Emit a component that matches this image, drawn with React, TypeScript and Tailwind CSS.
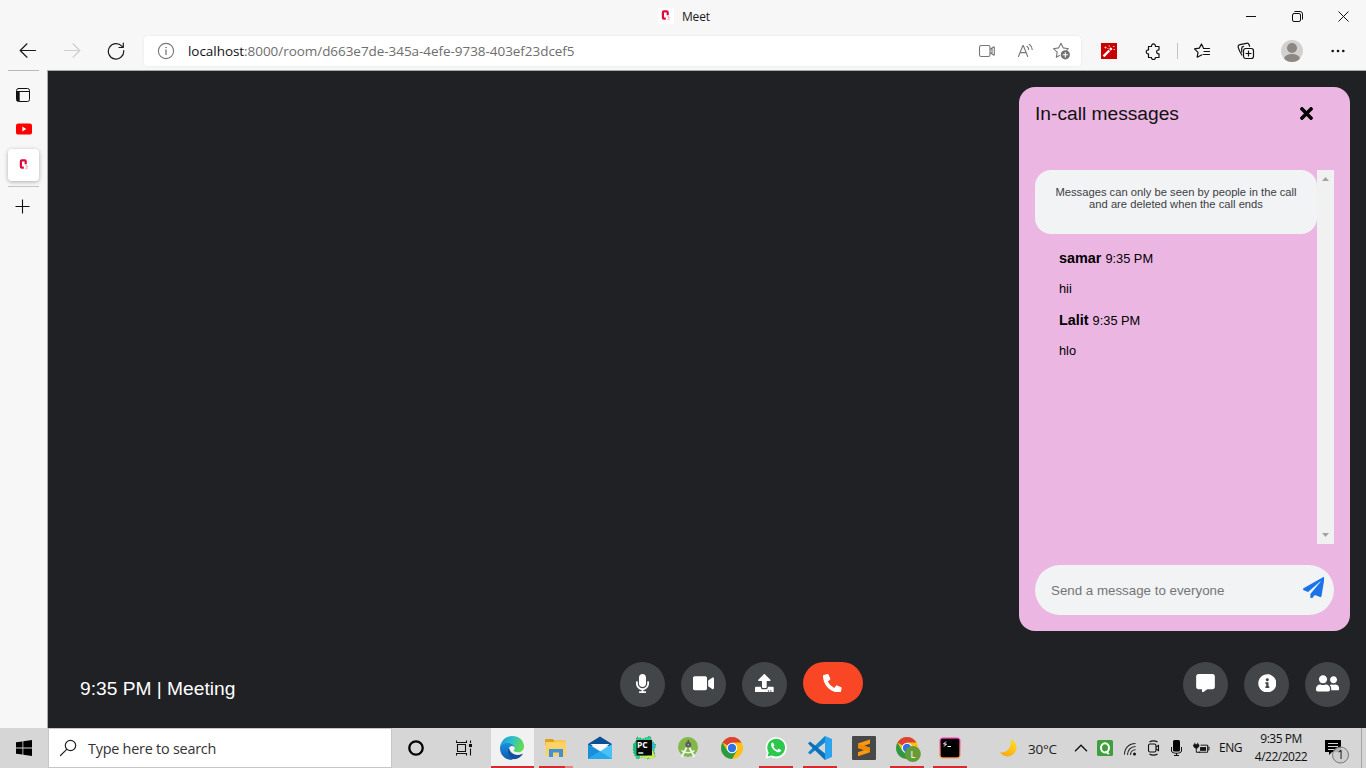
import React from "react";
import {
  FaTimes,
  FaPaperPlane,
  FaMicrophone,
  FaVideo,
  FaUpload,
  FaPhoneAlt,
  FaCommentAlt,
  FaInfoCircle,
  FaUserFriends,
} from "react-icons/fa";

type IconProps = { className?: string };

const stroke = {
  fill: "none",
  stroke: "currentColor",
  strokeLinecap: "round" as const,
  strokeLinejoin: "round" as const,
};

function MeetIcon({ className = "" }: IconProps) {
  return (
    <svg viewBox="0 0 16 16" className={"h-4 w-4 shrink-0 bg-white " + className}>
      <path d="M9.700 7.300V4.300c0-.6-.3-.9-.9-.9H5.800c-.6 0-.9.3-.9.900v5.400c0 .6.300.9.900.9h2" fill="none" stroke="#de0a3c" strokeWidth="2.200" />
      <path d="M9.300 9c1-.8 2.200-.2 2.100.5-.1.600-.9.700-.9.700s1 .2.900.9c-.2.800-1.500.8-2 .3" fill="none" stroke="#f58ca6" strokeWidth=".9" />
    </svg>
  );
}

function TitleBar() {
  return (
    <div className="flex h-8 items-center">
      <MeetIcon className="ml-[658px]" />
      <span className="mt-[2px] ml-2 w-[60px] text-[12px] leading-4 tracking-[-0.2px] text-[#1a1a1a]">Meet</span>
      <svg viewBox="0 0 10 10" className="ml-[504px] h-[10px] w-[10px] shrink-0"><path d="M0 5.500h10" stroke="#111" /></svg>
      <svg viewBox="0 0 11 11" className="ml-9 h-[11px] w-[11px] shrink-0" {...stroke} stroke="#111">
        <rect x=".5" y="2.500" width="8" height="8" rx="1.500" />
        <path d="M2.800.5h5.200a2.500 2.500 0 0 1 2.500 2.500v5.200" />
      </svg>
      <svg viewBox="0 0 11 11" className="ml-[35px] h-[11px] w-[11px] shrink-0" stroke="#111"><path d="M.5.500l10 10M10.500.500l-10 10" /></svg>
    </div>
  );
}

function Toolbar() {
  return (
    <div className="flex h-[38px] items-center">
      <svg viewBox="0 0 18 16" className="ml-[19px] h-4 w-[18px] shrink-0 text-[#1a1a1a]" {...stroke} strokeWidth="1.200">
        <path d="M16.500 7.500H1.500M8 .8L1.200 7.500 8 14.200" />
      </svg>
      <svg viewBox="0 0 18 16" className="ml-[26px] h-4 w-[18px] shrink-0 text-[#cfcfcf]" {...stroke} strokeWidth="1.200">
        <path d="M1.500 7.500h15M10 .8l6.800 6.700L10 14.200" />
      </svg>
      <svg viewBox="0 0 18 18" className="ml-[26px] h-[18px] w-[18px] shrink-0 text-[#1a1a1a]" {...stroke} strokeWidth="1.200">
        <path d="M16.700 8.500A7.700 7.700 0 1 1 14.800 4.200L16 5.300M16.300 1.200v4.300H12" />
      </svg>
      <div className="ml-[19px] flex h-[30px] w-[937px] shrink-0 items-center rounded bg-white shadow-[0_0_3px_rgba(0,0,0,0.07)]">
        <svg viewBox="0 0 18 18" className="ml-[13px] h-[18px] w-[18px] shrink-0 text-[#767676]" {...stroke}>
          <circle cx="9" cy="9" r="7.600" strokeWidth="1.100" />
          <path d="M9 8v4.500" strokeWidth="1.300" />
          <circle cx="9" cy="5.500" r=".5" fill="currentColor" strokeWidth=".5" />
        </svg>
        <span className="ml-[13px] w-[760px] text-[13.500px] tracking-[-0.05px] whitespace-nowrap text-[#6e6e6e]">
          <span className="text-[#111]">localhost</span>:8000/room/d663e7de-345a-4efe-9738-403ef23dcef5
        </span>
        <svg viewBox="0 0 18 14" className="ml-[30px] h-[14px] w-[18px] shrink-0 text-[#767676]" {...stroke} strokeWidth="1.100">
          <rect x="1.500" y="1.500" width="10.500" height="11" rx="1.800" />
          <path d="M12.300 5.300l3.300-2.300c.3-.2.700 0 .7.300v7.400c0 .3-.4.500-.7.300l-3.300-2.300M14 4.500v5" />
        </svg>
        <svg viewBox="0 0 18 16" className="ml-[21px] h-4 w-[18px] shrink-0 text-[#767676]" {...stroke} strokeWidth="1.100">
          <path d="M1.500 13.500L5.900 2.500h.4L10.700 13.500M3.100 9.600h6M9.900 3.300c1.100.8 1.700 1.800 1.800 3.200M12.200 1.300c1.800 1.200 2.800 3 3 5.200" />
        </svg>
        <svg viewBox="0 0 20 18" className="ml-[17px] h-[18px] w-5 shrink-0 text-[#767676]" {...stroke} strokeWidth="1.100">
          <path d="M7.500 13.600L4.300 15.300l.9-5.100L1.500 6.700l5.100-.8L9 1.300l2.300 4.600 5.100.8-1.800 1.600" />
          <circle cx="13.300" cy="12.800" r="4.600" fill="#707070" stroke="none" />
          <path d="M13.300 10.500v4.600M11 12.800h4.600" stroke="#fff" />
        </svg>
      </div>
      <svg viewBox="0 0 16 16" className="ml-[20px] h-4 w-4 shrink-0">
        <rect width="16" height="16" fill="#c80000" />
        <path d="M2.500 13.300l5.800-5.800" stroke="#fff" strokeWidth="2.400" />
        <path d="M9 6.800l1.600-1.600" stroke="#fff" strokeWidth="2.400" />
        <path d="M3.500 4.500h2M4.500 3.500v2M7.500 3h1.500M12 3.500h1.500M12.500 6.500h1.500M6.500 5.500h1" stroke="#ffc2c2" />
      </svg>
      <svg viewBox="0 0 16 17" className="ml-[28px] h-[17px] w-4 shrink-0 text-[#111]" {...stroke} strokeWidth="1.200">
        <path d="M3.500 3.500h3c-.3-3.500 4.300-3.500 4 0H14v3.300c-3.200-.2-3.200 4.300 0 4v3.700h-3.500c0 2.700-4.300 2.700-4 0h-3v-3.600c-3 .2-3-4.300 0-4z" />
      </svg>
      <div className="ml-4 h-4 w-px shrink-0 bg-[#c3c3c3]" />
      <svg viewBox="0 0 18 16" className="ml-[15px] h-4 w-[18px] shrink-0 text-[#111]" {...stroke} strokeWidth="1.200">
        <path d="M9 11.800L4.200 14.200l.8-4.900L1.500 5.800l4.800-.7L8.500 1l1.800 3.700M10.500 5.500h6M11 8.500h5.500M10.500 11.500h6" />
      </svg>
      <svg viewBox="0 0 18 18" className="ml-[26px] h-[18px] w-[18px] shrink-0 text-[#111]" {...stroke} strokeWidth="1.200">
        <rect x="6.500" y="6.500" width="10" height="10" rx="2.200" />
        <path d="M11.500 9v5M9 11.500h5M4.800 13C3.500 11 2 8 1.200 5.300.9 4 1.500 3 2.900 2.700l6.500-1.400c1.300-.3 2.300.3 2.700 1.500l.5 1.500M4.700 10V6.500c0-1.200.6-2 1.800-2.100" />
      </svg>
      <svg viewBox="0 0 22 22" className="ml-[26px] h-[22px] w-[22px] shrink-0">
        <defs><clipPath id="avatar"><circle cx="11" cy="11" r="11" /></clipPath></defs>
        <g clipPath="url(#avatar)">
          <rect width="22" height="22" fill="#d3d1cf" />
          <circle cx="11" cy="8" r="5" fill="#8c8782" />
          <ellipse cx="11" cy="19" rx="8" ry="5" fill="#8c8782" />
        </g>
      </svg>
      <svg viewBox="0 0 14 4" className="ml-[28px] h-1 w-[14px] shrink-0" fill="#111">
        <circle cx="1.700" cy="2" r="1.300" /><circle cx="7" cy="2" r="1.300" /><circle cx="12.300" cy="2" r="1.300" />
      </svg>
    </div>
  );
}

function TabRail() {
  return (
    <aside className="flex w-12 shrink-0 flex-col border-r border-[#a9aba9] bg-[#f7f7f7]">
      <div className="ml-2 h-px w-[31px] bg-[#b9b9b9]" />
      <svg viewBox="0 0 16 16" className="mt-4 ml-[15px] h-4 w-4" {...stroke} stroke="#111" strokeWidth="1">
        <rect x="1.500" y="1.500" width="13" height="13" rx="2" />
        <path d="M2 4.500h12" /><path d="M3.200 4.500v9.500" strokeWidth="3" strokeLinecap="butt" />
      </svg>
      <svg viewBox="0 0 16 12" className="mt-5 ml-4 h-3 w-4">
        <rect y=".4" width="16" height="11.200" rx="2.200" fill="#f00" />
        <path d="M6.300 3.600v4.800L10.300 6z" fill="#fff" />
      </svg>
      <div className="mt-[14px] ml-2 flex h-8 w-[31px] items-center justify-center rounded bg-white shadow-[0_1px_4px_rgba(0,0,0,0.3)]">
        <MeetIcon />
      </div>
      <div className="mt-[5px] ml-2 h-px w-[31px] bg-[#c4c4c4]" />
      <svg viewBox="0 0 15 15" className="mt-3 ml-[15px] h-[15px] w-[15px]" stroke="#111" strokeWidth="1.100"><path d="M7.500.500v14M.500 7.500h14" /></svg>
    </aside>
  );
}

function Message({ name, time, text }: { name: string; time: string; text: string }) {
  return (
    <div className="h-[62px] pl-6 text-[12.8px] leading-[15px]">
      <p className="flex h-[15px] items-baseline gap-1 text-black">
        <strong className="text-[14.4px] leading-[15px]">{name}</strong>
        <span>{time}</span>
      </p>
      <p className="mt-[15px] text-black">{text}</p>
    </div>
  );
}

function ChatPanel() {
  return (
    <section className="mt-4 mr-4 flex h-[544px] w-[331px] flex-col rounded-[16px] bg-[#ecb6e2] p-4">
      <header className="flex h-[67px] items-start justify-between">
        <h2 className="text-[19.2px] leading-[22px] text-[#111]">In-call messages</h2>
        <FaTimes className="mt-[.5px] mr-[20px] h-[19px] w-[15px] text-black" />
      </header>
      <div className="flex h-[374px]">
        <div className="w-[282px]">
          <p className="h-16 rounded-[16px] bg-[#f1f3f4] pt-4 text-center text-[11.2px] leading-3 tracking-[0.01px] text-[#3c4043]">
            Messages can only be seen by people in the call
            <br />
            and are deleted when the call ends
          </p>
          <div className="mt-[17px]">
            <Message name="samar" time="9:35 PM" text="hii" />
            <Message name="Lalit" time="9:35 PM" text="hlo" />
          </div>
        </div>
        <div className="flex w-[17px] flex-col items-center justify-between bg-[#f1f1f1] py-[7px]">
          <svg viewBox="0 0 7 4" className="h-1 w-[7px]"><path d="M0 4L3.500 0 7 4z" fill="#a3a3a3" /></svg>
          <svg viewBox="0 0 7 4" className="h-1 w-[7px]"><path d="M0 0l3.500 4L7 0z" fill="#a3a3a3" /></svg>
        </div>
      </div>
      <div className="mt-[21px] flex h-[50px] items-center justify-between rounded-[25px] bg-[#f1f3f4] pr-[10px] pl-4">
        <span className="mt-[2px] text-[13.333px] leading-4 text-[#757575]">Send a message to everyone</span>
        <FaPaperPlane className="mb-[5.500px] h-[21.500px] w-[21.500px] text-[#1a73e8]" />
      </div>
    </section>
  );
}

const round = "flex h-[45px] w-[45px] items-center justify-center rounded-full bg-[#434649] pb-[3px] text-white";

function CallBar() {
  return (
    <footer className="mt-[31px] flex h-[66px] w-full items-start">
      <p className="ml-8 mt-4 w-[540px] text-[19.2px] leading-[22px] text-white">9:35 PM | Meeting</p>
      <div className="flex gap-4">
        <button className={round}><FaMicrophone className="h-[19px] w-[13px]" /></button>
        <button className={round}><FaVideo className="h-[18.700px] w-[21px]" /></button>
        <button className={round}><FaUpload className="h-[18.700px] w-[18.700px]" /></button>
        <button className="flex h-[42px] w-[60px] items-center justify-center rounded-[21px] bg-[#f94726] pr-px text-white">
          <FaPhoneAlt className="h-[18.700px] w-[18.700px]" />
        </button>
      </div>
      <div className="mr-4 ml-auto flex gap-4">
        <button className={round}><FaCommentAlt className="h-[18.700px] w-[19px]" /></button>
        <button className={round}><FaInfoCircle className="ml-px h-[18.700px] w-[18.700px]" /></button>
        <button className={round}><FaUserFriends className="h-[18.700px] w-[23.400px]" /></button>
      </div>
    </footer>
  );
}

function ChromeMark() {
  return (
    <g>
      <circle cx="12" cy="12" r="11" fill="#fbc116" />
      <path d="M12 12L2.500 6.500A11 11 0 0 1 21.500 6.500H12z" fill="#dd4035" />
      <path d="M12 12L7.200 14.700 2.500 6.500A11 11 0 0 0 12 23l4.800-8.300z" fill="#2a9a48" />
      <circle cx="12" cy="12" r="5.200" fill="#fff" />
      <circle cx="12" cy="12" r="4.200" fill="#2f74e6" />
    </g>
  );
}

const appIcons: { key: string; art: React.ReactNode; active?: boolean; open?: boolean; grouped?: boolean }[] = [
  {
    key: "edge",
    active: true,
    open: true,
    art: (
      <>
        <defs>
          <linearGradient id="eg" x1="0" y1="0" x2="1" y2=".4"><stop offset="0" stopColor="#1b93dc" /><stop offset=".5" stopColor="#2cbfc9" /><stop offset="1" stopColor="#62da58" /></linearGradient>
          <linearGradient id="eb" x1="0" y1="0" x2="0" y2="1"><stop offset="0" stopColor="#1b8fe0" /><stop offset="1" stopColor="#0b5cb0" /></linearGradient>
        </defs>
        <path d="M0 11C1 4.500 6 0 12.300 0 19 0 24 4.800 24 10.300c0 4-3 6-6.200 6-2.800 0-4.300-1.100-4-2 .3-.7 1-1.200 1-2.600 0-2.300-2.500-4.200-5.800-4.200C5 7.500 1.500 9 0 11z" fill="url(#eg)" />
        <path d="M0 12c0-3 4-4.900 8-4.900 4.200 0 6.800 2.400 6.800 4.600-1-1.500-2.800-2-4.300-1.300C6 12.500 7 20 14 22.500 12 24 11 24 10 23.800 4 23 0 18 0 12z" fill="url(#eb)" />
        <path d="M9 11.500c-2.500 2.500-1.500 9 4 11.500 4 .8 7.500-1.500 9.500-4.500.3-.6-.1-.8-.6-.6-5.400 2.600-11.900.1-12.900-6.400z" fill="#10509c" />
      </>
    ),
  },
  {
    key: "files",
    open: true,
    grouped: true,
    art: (
      <>
        <path d="M1 4c0-.6.400-1 1-1h7l1.500 2H21v4H1z" fill="#e0a11b" />
        <path d="M10.500 4h11v3h-11z" fill="#f8c84e" />
        <rect x="1.500" y="6" width="20.500" height="14" fill="#fdd264" />
        <path d="M5 21v-8h14v8h-4v-4.500H9V21z" fill="#3e91d8" />
      </>
    ),
  },
  {
    key: "mail",
    art: (
      <>
        <path d="M0 8L12 .5 24 8v2H0z" fill="#0b4f96" />
        <path d="M2.500 8h19l-9.500 8z" fill="#f8fafc" />
        <path d="M0 8l12 7.300L24 23H0z" fill="#1b8edb" />
        <path d="M24 8L0 23h24z" fill="#46c2f6" />
        <path d="M0 23l12-7.700L24 23z" fill="#28a8ea" />
      </>
    ),
  },
  {
    key: "pycharm",
    art: (
      <>
        <path d="M5 1l6 2 7-3 2 5 4 4-2 5 1 7-7 2-5-2-6 2-3-5-1-6 2-4z" fill="#2bd58a" stroke="#15382a" strokeWidth=".6" strokeDasharray="1 2" />
        <path d="M19 6l4 3-2 4h-2z" fill="#22b9e4" />
        <path d="M20 13l3 8-5 2-3-3z" fill="#d3ec4a" />
        <path d="M8 20h9l-2 3-4-2-3 1z" fill="#c8f04c" />
        <path d="M1 8l4-3v14l-3-1z" fill="#17bf73" />
        <rect x="4.500" y="4" width="15.500" height="15.500" fill="#080808" />
        <text x="5" y="11.800" fontSize="8.500" fontWeight="bold" fill="#fff" fontFamily="Open Sans, sans-serif">PC</text>
        <path d="M6.300 17h5" stroke="#fff" strokeWidth="1.400" />
      </>
    ),
  },
  {
    key: "android",
    art: (
      <>
        <circle cx="12" cy="11" r="10" fill="#81b847" />
        <path d="M12 9L5.500 21M12 9l6.500 12" stroke="#f4f4f4" strokeWidth="1.900" />
        <path d="M5.500 14.500c3 3 10 3 13 0" stroke="#f4f4f4" strokeWidth="1.300" fill="none" />
        <circle cx="12.300" cy="8.700" r="3" fill="#5b625c" />
        <circle cx="12.300" cy="8.700" r=".8" fill="#a8c08b" />
        <path d="M12.300 4v3" stroke="#555" strokeWidth="1.500" />
      </>
    ),
  },
  { key: "chrome", art: <ChromeMark /> },
  {
    key: "whatsapp",
    open: true,
    art: (
      <>
        <path d="M1.500 22.500L3 17A10.600 10.600 0 1 1 7 21z" fill="#fff" />
        <path d="M3.500 20.500l1.200-4A8.900 8.900 0 1 1 8 19.500z" fill="#2cc84d" />
        <path d="M9 6.500c-.6-.3-2 .6-2 2.200 0 3.300 4.600 7.600 7.700 7.600 1.500 0 2.800-1.100 2.500-2.200l-2.600-1.400-1.300 1.400c-1.700-.6-3.200-2-3.900-3.600l1-1.200z" fill="#fff" />
      </>
    ),
  },
  {
    key: "code",
    open: true,
    art: (
      <>
        <path d="M17 0L2 14.500 0 16.500l2 2L17 6.500z" fill="#1284cf" />
        <path d="M17 24L2 9.500 0 7.500l2-2L17 17.500z" fill="#0a70b8" />
        <path d="M17 0l7 3v18l-7 3z" fill="#2ba3ee" />
      </>
    ),
  },
  {
    key: "sublime",
    art: (
      <>
        <rect width="24" height="24" rx="1" fill="#484848" />
        <path d="M6 7.500l12-4v4l-6 2.200 6 2v4.600l-12 4v-4l6.200-2.200-6.200-2z" fill="#ff9a0c" />
        <path d="M6 7.500l12 4.200v4.200L6 12z" fill="#f08a00" />
      </>
    ),
  },
  {
    key: "profile",
    open: true,
    art: (
      <>
        <ChromeMark />
        <circle cx="17.800" cy="18" r="8" fill="#659b38" />
        <text x="15.500" y="21.500" fontSize="9.500" fill="#fff" fontFamily="Open Sans, sans-serif">L</text>
      </>
    ),
  },
  {
    key: "terminal",
    open: true,
    art: (
      <>
        <defs><linearGradient id="tm" x1="0" y1="0" x2="0" y2="1"><stop offset="0" stopColor="#fe2fb5" /><stop offset="1" stopColor="#fc9a3c" /></linearGradient></defs>
        <rect x="1.500" y="1.500" width="21" height="21" rx="3.500" fill="url(#tm)" />
        <rect x="2.700" y="2.700" width="18.600" height="18.600" rx="2" fill="#000" />
        <path d="M8 5.500L5.500 8h3L6 10.500M9.500 10.500h3.500" stroke="#fff" fill="none" />
      </>
    ),
  },
];

function Taskbar() {
  return (
    <div className="flex h-10 items-center overflow-hidden bg-[#d6d6d6]">
      <svg viewBox="0 0 16 16" className="ml-4 h-4 w-4 shrink-0" fill="#000">
        <path d="M0 2.300L6.500 1.400v6.200H0zM7.300 1.300L16 0v7.600H7.300zM0 8.400h6.500v6.200L0 13.700zM7.300 8.400H16V16l-8.700-1.300z" />
      </svg>
      <div className="ml-4 flex h-10 w-[344px] shrink-0 items-center border border-[#c6c6c6] bg-white">
        <svg viewBox="0 0 18 18" className="ml-[10px] h-[18px] w-[18px] shrink-0" {...stroke} stroke="#222" strokeWidth="1.200">
          <circle cx="11.500" cy="6.500" r="5.200" /><path d="M7.700 10.300L1.500 16.500" />
        </svg>
        <span className="mt-[2px] ml-[11px] text-[14.400px] tracking-[-0.23px] whitespace-nowrap text-[#333]">Type here to search</span>
      </div>
      <svg viewBox="0 0 16 16" className="ml-4 h-4 w-4 shrink-0"><circle cx="8" cy="8" r="6.700" fill="none" stroke="#000" strokeWidth="2.300" /></svg>
      <svg viewBox="0 0 16 16" className="ml-8 h-4 w-4 shrink-0" fill="none" stroke="#111" strokeWidth="1.100">
        <path d="M.5.500v2h10v-2M.5 15.500v-2h10v2M14.500.500v2.500M14.500 8.500v7M1.500 4.500h8v7h-8z" />
        <rect x="13.500" y="4.500" width="2" height="2" fill="#111" />
      </svg>
      <div className="ml-[18px] grid h-10 w-[481px] shrink-0 grid-cols-[43px_repeat(7,44px)_repeat(3,43px)] pl-px">
        {appIcons.map((app) => (
          <div key={app.key} className={app.active ? "flex flex-col items-center bg-[#f1f1f1]" : "flex flex-col items-center"}>
            <svg viewBox="0 0 24 24" className={app.active ? "mt-2 mr-px h-6 w-6 shrink-0 overflow-visible" : "mt-2 h-6 w-6 shrink-0 overflow-visible"}>{app.art}</svg>
            {app.open && (
              <div className={app.active ? "mt-[6px] flex h-[2px] w-full bg-[#d32b2f]" : "mt-[6px] flex h-[2px] w-[34px] bg-[#d32b2f]"}>
                {app.grouped && <div className="ml-auto h-[2px] w-2 bg-[#e08488]" />}
              </div>
            )}
          </div>
        ))}
      </div>
      <svg viewBox="0 0 18 18" className="ml-[29px] h-[18px] w-[18px] shrink-0">
        <defs><linearGradient id="mn" x1="1" y1="0" x2=".4" y2="1"><stop offset="0" stopColor="#ffe226" /><stop offset="1" stopColor="#fbab12" /></linearGradient></defs>
        <path d="M10.500 0A9 9 0 1 1 0 13.500C7 14.500 12.500 8 10.500 0z" fill="url(#mn)" />
      </svg>
      <span className="mt-[2px] ml-[10px] w-[30px] shrink-0 text-[13.500px] tracking-[-0.2px] whitespace-nowrap text-[#222]">30°C</span>
      <svg viewBox="0 0 14 8" className="ml-4 h-2 w-[14px] shrink-0" fill="none" stroke="#111" strokeWidth="1.300"><path d="M1 7.300L7 1.200l6 6.100" /></svg>
      <svg viewBox="0 0 16 16" className="ml-[9px] h-4 w-4 shrink-0">
        <rect width="16" height="16" rx="1.500" fill="#3f9f3c" />
        <ellipse cx="8" cy="7.800" rx="4" ry="4.600" fill="none" stroke="#fff" strokeWidth="2" /><path d="M8.500 11.500l3.500 2.500" stroke="#fff" strokeWidth="1.800" />
      </svg>
      <svg viewBox="0 0 14 14" className="mt-[2px] ml-[10px] h-[14px] w-[14px] shrink-0" fill="none" stroke="#222" strokeWidth="1.100">
        <path d="M1.500 12.500C1.500 6 6 1.500 12.500 1.500M4.500 13C4.500 8 8 4.500 12.500 4.500M7.500 13c0-3 2-5.200 5-5.200" />
        <circle cx="11.500" cy="12" r="1.500" fill="#111" stroke="none" />
      </svg>
      <svg viewBox="0 0 14 16" className="ml-[10px] h-4 w-[14px] shrink-0" fill="none" stroke="#111" strokeWidth="1.100">
        <rect x="1.500" y="4" width="7.500" height="8" rx="1.500" /><path d="M9 7l2.500-1.500v5L9 9M2.500 2c2-1.500 6-1.500 8 0M2.500 14c2 1.500 6 1.500 8 0" />
      </svg>
      <svg viewBox="0 0 12 16" className="ml-[9px] h-4 w-3 shrink-0" fill="none" stroke="#111">
        <rect x="3" y="0" width="7" height="11.500" rx="1.500" fill="#000" stroke="none" /><path d="M1.500 7v4c0 3 10 3 10 0V7M6.500 13v2.500M4 15.500h5" />
      </svg>
      <svg viewBox="0 0 18 12" className="ml-[11px] h-3 w-[17px] shrink-0" fill="none" stroke="#111">
        <path d="M2 .5v2M5 .5v2M3.500 6v4.500h4" /><path d="M.8 2.500h5.400v2L4.500 6h-2L.8 4.500z" fill="#111" />
        <path d="M8 3h7.500v7.500H6M15.500 5h1.500v3h-1.500" /><path d="M7.500 5h6.300v4H7.500z" fill="#111" stroke="none" />
      </svg>
      <span className="ml-[9px] w-[24px] shrink-0 text-[12px] tracking-[-0.5px] text-[#111]">ENG</span>
      <div className="ml-[11px] flex h-10 w-[54px] shrink-0 flex-col items-center pt-[2px] text-[12px] leading-[18px] tracking-[-0.5px] whitespace-nowrap text-[#111]">
        <span>9:35 PM</span>
        <span>4/22/2022</span>
      </div>
      <svg viewBox="0 0 26 26" className="mt-[6px] ml-[16px] h-[26px] w-[26px] shrink-0">
        <path d="M1 2h16v12H8l-3 3v-3H1z" fill="#000" /><path d="M4 5.500h10M4 8.500h10M4 11.500h6" stroke="#d6d6d6" />
        <circle cx="16.500" cy="17" r="8" fill="#ccc" fillOpacity=".85" stroke="#777" />
        <text x="13.200" y="21.300" fontSize="12" fill="#111" fontFamily="Open Sans, sans-serif">1</text>
      </svg>
      <div className="ml-auto h-10 w-[5px] shrink-0 border-l border-[#a5a5a5]" />
    </div>
  );
}

export default function App() {
  return (
    <div className="flex h-[768px] w-[1366px] flex-col overflow-hidden bg-[#f7f7f7] font-['Open_Sans','Noto_Sans',sans-serif]">
      <TitleBar />
      <Toolbar />
      <div className="flex h-[658px] shrink-0">
        <TabRail />
        <main className="flex flex-1 flex-col items-end border-t border-[#a9aba9] bg-[#202124] font-['Liberation_Sans',Arial,sans-serif]">
          <ChatPanel />
          <CallBar />
        </main>
      </div>
      <Taskbar />
    </div>
  );
}
